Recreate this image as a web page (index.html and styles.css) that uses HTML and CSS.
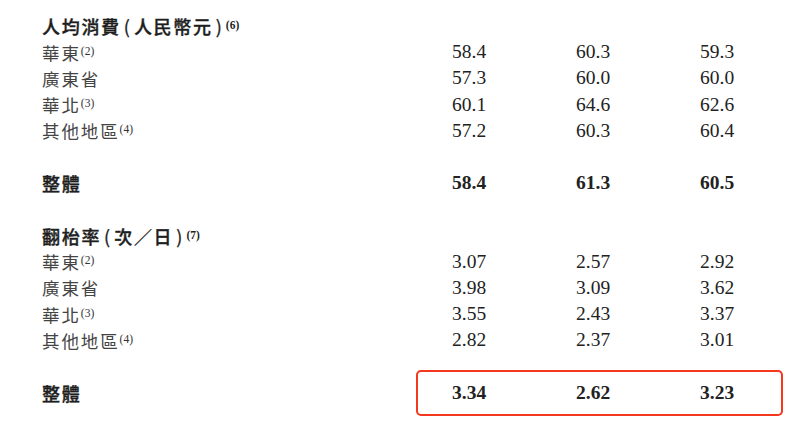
FILE: index.html
```html
<!DOCTYPE html>
<html lang="zh-Hant">
<head>
  <meta charset="UTF-8">
  <title>人均消費及翻枱率</title>
  <link rel="stylesheet" href="styles.css">
</head>
<body>
  <div class="sheet">
    <div class="row head"><div class="label">人均消費<span class="paren">(</span>人民幣元<span class="paren">)</span><sup>(6)</sup></div><div class="vals"></div></div>
    <div class="row"><div class="label">華東<sup>(2)</sup></div><div class="vals"><span>58.4</span><span>60.3</span><span>59.3</span></div></div>
    <div class="row"><div class="label">廣東省</div><div class="vals"><span>57.3</span><span>60.0</span><span>60.0</span></div></div>
    <div class="row"><div class="label">華北<sup>(3)</sup></div><div class="vals"><span>60.1</span><span>64.6</span><span>62.6</span></div></div>
    <div class="row"><div class="label">其他地區<sup>(4)</sup></div><div class="vals"><span>57.2</span><span>60.3</span><span>60.4</span></div></div>
    <div class="row blank"></div>
    <div class="row total"><div class="label">整體</div><div class="vals"><span>58.4</span><span>61.3</span><span>60.5</span></div></div>
    <div class="row blank"></div>

    <div class="row head"><div class="label">翻枱率<span class="paren">(</span>次／日<span class="paren">)</span><sup>(7)</sup></div><div class="vals"></div></div>
    <div class="row"><div class="label">華東<sup>(2)</sup></div><div class="vals"><span>3.07</span><span>2.57</span><span>2.92</span></div></div>
    <div class="row"><div class="label">廣東省</div><div class="vals"><span>3.98</span><span>3.09</span><span>3.62</span></div></div>
    <div class="row"><div class="label">華北<sup>(3)</sup></div><div class="vals"><span>3.55</span><span>2.43</span><span>3.37</span></div></div>
    <div class="row"><div class="label">其他地區<sup>(4)</sup></div><div class="vals"><span>2.82</span><span>2.37</span><span>3.01</span></div></div>
    <div class="row blank"></div>
    <div class="row total"><div class="label">整體</div><div class="vals marked"><span>3.34</span><span>2.62</span><span>3.23</span></div></div>
  </div>
</body>
</html>
```

FILE: styles.css
```css
html, body {
  margin: 0;
  height: 100%;
  background-color: #ffffff;
}
.sheet {
  padding: 13px 0 20px 42px;
}
.row {
  display: flex;
  height: 26.2px;
  align-items: center;
}
.label {
  width: 374px;
  font-family: "Noto Sans CJK TC", "Noto Sans CJK SC", sans-serif;
  font-size: 17.5px;
  letter-spacing: 1.9px;
  color: #444444;
  white-space: nowrap;
}
.head .label,
.total .label {
  color: #1e1e1e;
  font-size: 18px;
  letter-spacing: 1.7px;
  font-weight: 500;
  -webkit-text-stroke: 0.35px #1e1e1e;
}
.paren {
  display: inline-block;
  margin: 0 4px 0 3px;
  letter-spacing: 0;
  font-weight: 400;
}
.label sup {
  font-family: "Liberation Serif", serif;
  font-size: 11.5px;
  letter-spacing: 0;
  vertical-align: 5px;
  margin-left: 0;
  color: #333333;
  -webkit-text-stroke: 0;
}
.head .label sup {
  font-weight: 700;
  color: #1e1e1e;
}
.vals {
  width: 367px;
  display: grid;
  grid-template-columns: 124px 124px 119px;
  padding-left: 36px;
  box-sizing: border-box;
  position: relative;
  font-family: "Liberation Serif", serif;
  font-size: 19.5px;
  color: #222222;
}
.total .vals {
  font-weight: 700;
}
.marked::after {
  content: "";
  position: absolute;
  left: 0;
  right: 0;
  top: -12px;
  bottom: -12px;
  border: 2px solid #f5371e;
  border-radius: 5px;
}
```
